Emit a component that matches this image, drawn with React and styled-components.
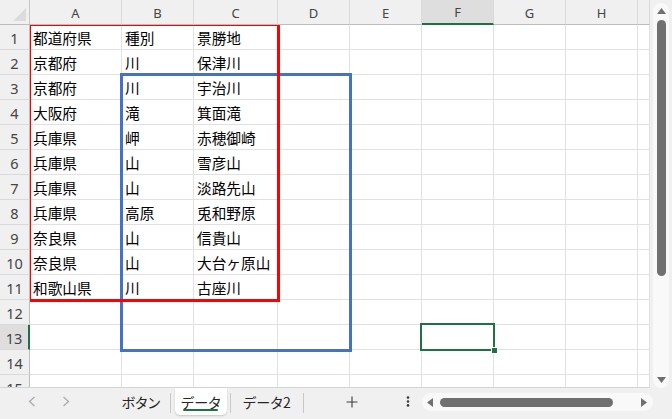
import React from 'react';
import styled, { createGlobalStyle } from 'styled-components';

const GlobalStyle = createGlobalStyle`
  html, body {
    margin: 0;
    padding: 0;
    background: #f0f0f0;
  }
  * {
    box-sizing: border-box;
  }
`;

// column widths incl. right gridline: row header, A..H, partial I
const COLS = [30, 92, 72, 84, 72, 72, 72, 72, 72, 12];
const HEAD_H = 25;
const ROW_H = 25;
const LETTERS = ['', 'A', 'B', 'C', 'D', 'E', 'F', 'G', 'H', ''];

const DATA = [
  ['都道府県', '種別', '景勝地'],
  ['京都府', '川', '保津川'],
  ['京都府', '川', '宇治川'],
  ['大阪府', '滝', '箕面滝'],
  ['兵庫県', '岬', '赤穂御崎'],
  ['兵庫県', '山', '雪彦山'],
  ['兵庫県', '山', '淡路先山'],
  ['兵庫県', '高原', '兎和野原'],
  ['奈良県', '山', '信貴山'],
  ['奈良県', '山', '大台ヶ原山'],
  ['和歌山県', '川', '古座川'],
];

const ACTIVE_COL = 6; // F
const ACTIVE_ROW = 13;

// pixel of the gridline on the right of column i (0 = row header)
const edgeX = (i) => COLS.slice(0, i + 1).reduce((a, b) => a + b, 0) - 1;
const edgeY = (r) => HEAD_H + r * ROW_H - 1;

const Window = styled.div`
  width: 672px;
  height: 419px;
  display: flex;
  flex-direction: column;
  background: #f0f0f0;
  overflow: hidden;
`;

const Main = styled.div`
  display: flex;
  height: 388px;
`;

const Sheet = styled.div`
  position: relative;
  width: 650px;
  height: 388px;
  overflow: hidden;
  background: #fff;
  display: grid;
  grid-template-columns: ${COLS.map((c) => c + 'px').join(' ')};
  grid-template-rows: ${HEAD_H}px repeat(15, ${ROW_H}px);
  border-bottom: 1px solid #d4d4d4;
`;

const ColHead = styled.div`
  position: relative;
  z-index: 3;
  display: flex;
  align-items: center;
  justify-content: center;
  background: ${(p) => (p.$active ? '#dedede' : '#f0f0f0')};
  border-right: 1px solid ${(p) => (p.$corner ? '#c8c8c8' : '#dadada')};
  border-bottom: ${(p) => (p.$active ? '2px solid #1e7145' : '1px solid #bdbdbd')};
  font-family: 'Noto Sans', 'Liberation Sans', sans-serif;
  font-size: 13px;
  color: #444;
  padding-top: 1px;
`;

const Corner = styled(ColHead)`
  &::after {
    content: '';
    position: absolute;
    right: 3px;
    bottom: 3px;
    width: 0;
    height: 0;
    border-left: 13px solid transparent;
    border-bottom: 13px solid #dcdcdc;
  }
`;

const RowHead = styled.div`
  position: relative;
  z-index: 3;
  display: flex;
  align-items: center;
  justify-content: center;
  background: ${(p) => (p.$active ? '#dedede' : '#f0f0f0')};
  border-right: ${(p) => (p.$active ? '2px solid #1e7145' : '1px solid #bdbdbd')};
  border-bottom: 1px solid #dadada;
  font-family: 'Noto Sans', 'Liberation Sans', sans-serif;
  font-size: 14.5px;
  color: #444;
  padding-top: 1px;
`;

const Cell = styled.div`
  display: flex;
  align-items: center;
  padding: 1px 0 0 3px;
  border-right: 1px solid #e1e1e1;
  border-bottom: 1px solid #e1e1e1;
  font-family: 'Noto Sans CJK JP', 'Noto Sans', sans-serif;
  font-size: 14.67px;
  color: #000;
  white-space: nowrap;
`;

const RangeBox = styled.div`
  position: absolute;
  z-index: ${(p) => p.$z};
  left: ${(p) => p.$x}px;
  top: ${(p) => p.$y}px;
  width: ${(p) => p.$w}px;
  height: ${(p) => p.$h}px;
  border: ${(p) => p.$t}px solid ${(p) => p.$color};
  pointer-events: none;
`;

const FillHandle = styled.div`
  position: absolute;
  z-index: 3;
  left: ${(p) => p.$x}px;
  top: ${(p) => p.$y}px;
  width: 7px;
  height: 7px;
  background: #1e7145;
  border: 1px solid #fff;
`;

const VScroll = styled.div`
  width: 22px;
  padding: 3px 3px 0 3px;
  display: flex;
`;

const VTrack = styled.div`
  flex: 1;
  background: #f9f9f9;
  border-radius: 8px;
  display: flex;
  flex-direction: column;
  align-items: center;
  padding: 4px 0 4px;
  gap: 5px;
`;

const VThumb = styled.div`
  width: 9px;
  height: 256px;
  border-radius: 5px;
  background: #707070;
`;

const Spacer = styled.div`
  flex: 1;
`;

const TabBar = styled.div`
  flex: 1;
  display: flex;
  align-items: stretch;
  font-family: 'Noto Sans CJK JP', 'Noto Sans', sans-serif;
  font-size: 14px;
  color: #262626;
  font-feature-settings: 'palt';
`;

const Nav = styled.div`
  display: flex;
  width: 112px;
  padding-left: 15px;
  align-items: center;
`;

const NavButton = styled.div`
  width: 34px;
  display: flex;
  justify-content: center;
  align-items: center;
  padding-bottom: 4px;
`;

const Tab = styled.div`
  position: relative;
  display: flex;
  align-items: center;
  justify-content: center;
  width: ${(p) => p.$w}px;
  margin: ${(p) => (p.$active ? '0 3px 4px 4px' : '0 0 4px')};
  background: ${(p) => (p.$active ? '#fff' : 'transparent')};
  border-radius: 0 0 5px 5px;
  box-shadow: ${(p) => (p.$active ? '0 1px 2px rgba(0,0,0,0.18)' : 'none')};
  letter-spacing: 0.3px;

  &::after {
    content: '';
    display: ${(p) => (p.$active ? 'block' : 'none')};
    position: absolute;
    left: 8px;
    right: 9px;
    bottom: 4px;
    height: 2px;
    border-radius: 1px;
    background: #1e7145;
  }
`;

const Sep = styled.div`
  width: 1px;
  margin: 5px 0 6px;
  background: #c8c8c8;
`;

const IconButton = styled.div`
  width: ${(p) => p.$w}px;
  display: flex;
  justify-content: center;
  align-items: center;
  padding-bottom: 4px;
`;

const HScroll = styled.div`
  width: 231px;
  margin: 5px 0 8px 7px;
  background: #f9f9f9;
  border-radius: 9px;
  display: flex;
  align-items: center;
  padding: 0 5px 0 4px;
  gap: 6px;
`;

const HThumb = styled.div`
  width: 173px;
  height: 9px;
  border-radius: 5px;
  background: #707070;
`;

const Tri = ({ dir }) => {
  const pts = {
    up: '0,7 4.5,1 9,7',
    down: '0,1 4.5,7 9,1',
    left: '7,0 1,4.5 7,9',
    right: '1,0 7,4.5 1,9',
  }[dir];
  const vertical = dir === 'up' || dir === 'down';
  return (
    <svg width={vertical ? 9 : 8} height={vertical ? 8 : 9} viewBox={vertical ? '0 0 9 8' : '0 0 8 9'}>
      <polygon points={pts} fill="#707070" />
    </svg>
  );
};

const Chevron = ({ dir }) => (
  <svg width="8" height="11" viewBox="0 0 8 11">
    <polyline
      points={dir === 'left' ? '6.5,1 1.5,5.5 6.5,10' : '1.5,1 6.5,5.5 1.5,10'}
      fill="none"
      stroke="#a8a8a8"
      strokeWidth="1.2"
    />
  </svg>
);

const Plus = () => (
  <svg width="12" height="12" viewBox="0 0 12 12">
    <path d="M6 0.5V11.5M0.5 6H11.5" stroke="#3c3c3c" strokeWidth="1.1" />
  </svg>
);

const Dots = () => (
  <svg width="4" height="11" viewBox="0 0 4 11">
    <circle cx="2" cy="1.6" r="1.3" fill="#3c3c3c" />
    <circle cx="2" cy="5.5" r="1.3" fill="#3c3c3c" />
    <circle cx="2" cy="9.4" r="1.3" fill="#3c3c3c" />
  </svg>
);

// outline box around a cell range, centred on its gridlines
const box = (c1, r1, c2, r2, t) => {
  const x = edgeX(c1 - 1) - Math.floor(t / 2);
  const y = edgeY(r1 - 1) - Math.floor(t / 2);
  return {
    $x: x,
    $y: y,
    $w: edgeX(c2) + Math.ceil(t / 2) + 1 - x,
    $h: edgeY(r2) + Math.ceil(t / 2) + 1 - y,
    $t: t,
  };
};

function Grid() {
  const cells = [<Corner key="corner" $corner />];
  for (let i = 1; i < LETTERS.length; i++) {
    cells.push(
      <ColHead key={'h' + i} $active={i === ACTIVE_COL}>
        {LETTERS[i]}
      </ColHead>
    );
  }
  for (let r = 1; r <= 15; r++) {
    cells.push(
      <RowHead key={'r' + r} $active={r === ACTIVE_ROW}>
        {r}
      </RowHead>
    );
    const row = DATA[r - 1] || [];
    for (let c = 1; c < COLS.length; c++) {
      cells.push(<Cell key={r + '-' + c}>{row[c - 1] || ''}</Cell>);
    }
  }

  const sel = box(ACTIVE_COL, ACTIVE_ROW, ACTIVE_COL, ACTIVE_ROW, 2);

  return (
    <Sheet>
      {cells}
      {/* blue B3:D13, red A1:C11, active cell F13 */}
      <RangeBox {...box(2, 3, 4, 13, 3)} $color="#4472c4" $z={1} />
      <RangeBox {...box(1, 1, 3, 11, 3)} $color="#ff0000" $z={2} />
      <RangeBox {...sel} $color="#1e7145" $z={2} />
      <FillHandle $x={sel.$x + sel.$w - 4} $y={sel.$y + sel.$h - 4} />
    </Sheet>
  );
}

export default function App() {
  return (
    <>
      <GlobalStyle />
      <Window>
        <Main>
          <Grid />
          <VScroll>
            <VTrack>
              <Tri dir="up" />
              <VThumb />
              <Spacer />
              <Tri dir="down" />
            </VTrack>
          </VScroll>
        </Main>
        <TabBar>
          <Nav>
            <NavButton>
              <Chevron dir="left" />
            </NavButton>
            <NavButton>
              <Chevron dir="right" />
            </NavButton>
          </Nav>
          <Tab $w={58}>ボタン</Tab>
          <Sep />
          <Tab $w={52} $active>
            データ
          </Tab>
          <Sep />
          <Tab $w={72}>データ2</Tab>
          <Sep />
          <IconButton $w={96}>
            <Plus />
          </IconButton>
          <IconButton $w={15}>
            <Dots />
          </IconButton>
          <HScroll>
            <Tri dir="left" />
            <HThumb />
            <Spacer />
            <Tri dir="right" />
          </HScroll>
        </TabBar>
      </Window>
    </>
  );
}
